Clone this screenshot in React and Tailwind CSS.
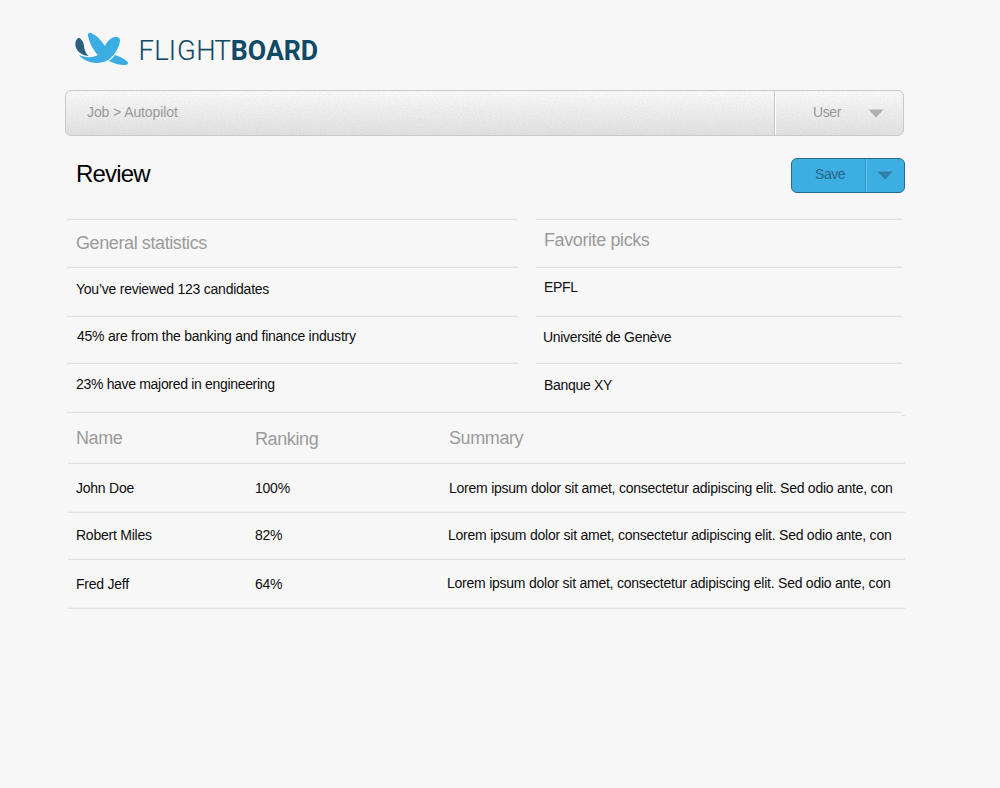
import React from "react";

const rule = "border-t border-[#e1e1e1] shadow-[0_-1px_0_#f0f0f0]";
const body = "text-[14px] leading-5 text-[#0d0d0d] tracking-[-0.24px]";
const bodyTight = "text-[14px] leading-5 text-[#0d0d0d] tracking-[-0.32px]";
const heading = "text-[18px] leading-6 text-[#9b9b9b] tracking-[-0.4px]";

function Row({ size, children }) {
  return <div className={`flex items-start whitespace-nowrap ${rule} ${size}`}>{children}</div>;
}

function Grain({ id, opacity }) {
  return (
    <svg className="pointer-events-none absolute inset-0 h-full w-full" opacity={opacity} aria-hidden="true">
      <filter id={id}>
        <feTurbulence type="fractalNoise" baseFrequency="0.7" numOctaves="2" seed="4" />
        <feColorMatrix type="matrix" values="0 0 0 0 0.3  0 0 0 0 0.3  0 0 0 0 0.3  1.6 0 0 0 -0.6" />
      </filter>
      <rect width="100%" height="100%" filter={`url(#${id})`} />
    </svg>
  );
}

function Logo() {
  return (
    <svg width="260" height="46" viewBox="0 0 260 46" aria-label="Flightboard">
      <g transform="scale(0.33333)">
        <path fill="#2a5f7e" d="M26 35C20 38 15 46 16 56C18 72 31 88 56 90C47 82 43 72 42 60C41 47 34 38 26 35Z" />
        <path fill="#3aaee3" d="M54 31C52 24 56 19 63 21C79 27 94 44 105 60C112 45 123 34 136 33C146 32 151 37 150 45C147 66 132 91 113 103C92 115 64 113 45 102C36 97 30 92 28 87C44 95 66 96 83 88C69 71 58 50 54 31Z" />
        <path fill="#3aaee3" d="M135 87C151 92 167 101 173 108C176 113 172 117 164 117C148 117 130 112 116 105C124 100 130 94 135 87Z" />
      </g>
      <g fill="#0f4a66" fontFamily="Roboto, 'Liberation Sans', sans-serif" fontSize="27.4">
        <text x="68.6 84.3 98.7 107 126.2 144.5" y="33.8" fontWeight="300" stroke="#0f4a66" strokeWidth="0.15">FLIGHT</text>
        <text x="160.8" y="33.8" fontWeight="700" textLength="87.4" lengthAdjust="spacingAndGlyphs">BOARD</text>
      </g>
    </svg>
  );
}

function Caret({ className }) {
  return (
    <svg width="16" height="9" viewBox="0 0 16 9" className={className} aria-hidden="true">
      <path d="M0.5 0.5H15.5L8 8.5Z" fill="currentColor" />
    </svg>
  );
}

function NavBar() {
  return (
    <nav className="relative flex h-[46px] w-[839px] overflow-hidden rounded-md border border-[#c9c9c9] bg-linear-to-b from-[#fafafa] to-[#e1e1e1] text-[14px] leading-5 text-[#999999]">
      <Grain id="grain-nav" opacity="0.13" />
      <div className="relative w-[709px] border-r border-[#c6c6c6] pt-[11px] pl-[21px] tracking-[-0.1px]">Job &gt; Autopilot</div>
      <div className="relative flex flex-1 border-l border-white pt-[11px] pl-[37px] tracking-[-0.4px]">
        <span className="w-[55px]">User</span>
        <Caret className="mt-[7px] text-[#b0b0b0]" />
      </div>
    </nav>
  );
}

function SaveButton() {
  return (
    <div className="relative mt-px flex h-[35px] w-[114px] overflow-hidden rounded-md border border-[#246b8e] bg-[#3cafe4] text-[14px] leading-5 text-[#246788]">
      <Grain id="grain-save" opacity="0.1" />
      <button className="relative flex w-[74px] items-start border-r border-[#2c93c4] pt-[5px] pl-[23px] leading-5 tracking-[-0.45px]">Save</button>
      <button className="relative flex flex-1 items-start border-l border-[#6cc6ee] pt-3 pl-[10px] text-[#2e80a8]">
        <Caret className="" />
      </button>
    </div>
  );
}

const summary = "Lorem ipsum dolor sit amet, consectetur adipiscing elit. Sed odio ante, con";

export default function App() {
  return (
    <main className="h-[788px] w-[1000px] overflow-hidden bg-[#f7f7f7] pl-[65px] font-['Liberation_Sans',Arial,sans-serif]">
      <header className="pt-[26px] pl-[5px]">
        <div className="flex h-16"><Logo /></div>
      </header>
      <NavBar />
      <div className="flex h-[83px] w-[840px] items-start justify-between pt-[21px]">
        <h1 className="mt-[2px] pl-[11px] text-[24px] leading-[30px] tracking-[-0.8px] text-black">Review</h1>
        <SaveButton />
      </div>

      <div className="flex gap-[18px] pl-[2px]">
        <section className="w-[451px]">
          <Row size="h-12 w-[450px]"><h2 className={`pt-[11px] pl-[9px] ${heading}`}>General statistics</h2></Row>
          <Row size="h-[49px]"><p className={`pt-[11px] pl-[9px] ${body}`}>You’ve reviewed 123 candidates</p></Row>
          <Row size="h-[47px]"><p className={`pt-[9px] pl-[10px] ${body}`}>45% are from the banking and finance industry</p></Row>
          <Row size="h-[49px]"><p className={`pt-[10px] pl-[9px] ${bodyTight}`}>23% have majored in engineering</p></Row>
        </section>
        <section className="w-[366px]">
          <Row size="h-12"><h2 className={`pt-2 pl-2 ${heading}`}>Favorite picks</h2></Row>
          <Row size="h-[49px]"><p className={`pt-[9px] pl-2 ${bodyTight}`}>EPFL</p></Row>
          <Row size="h-[47px]"><p className={`pt-[10px] pl-[7px] ${bodyTight}`}>Université de Genève</p></Row>
          <Row size="h-[49px]"><p className={`pt-[11px] pl-2 ${bodyTight}`}>Banque XY</p></Row>
        </section>
      </div>

      <section className="pl-[2px]">
        <div className="flex h-[51px] w-[838px]">
          <div className={`flex w-[834px] whitespace-nowrap ${rule}`}>
            <h2 className={`w-[188px] pt-[13px] pl-[9px] ${heading}`}>Name</h2>
            <h2 className={`w-[194px] pt-[14px] ${heading}`}>Ranking</h2>
            <h2 className={`pt-[13px] ${heading}`}>Summary</h2>
          </div>
          <div className="mt-[3px] h-px w-1 bg-[#e1e1e1]" />
        </div>
        <div className="w-[838px] pl-px">
          <Row size="h-[49px]">
            <p className={`w-[187px] pt-[14px] pl-2 ${body}`}>John Doe</p>
            <p className={`w-[194px] pt-[14px] ${body}`}>100%</p>
            <p className={`pt-[14px] ${body}`}>{summary}</p>
          </Row>
          <Row size="h-[47px]">
            <p className={`w-[187px] pt-3 pl-2 ${body}`}>Robert Miles</p>
            <p className={`w-[193px] pt-3 ${body}`}>82%</p>
            <p className={`pt-3 ${body}`}>{summary}</p>
          </Row>
          <Row size="h-[49px]">
            <p className={`w-[187px] pt-[14px] pl-2 ${body}`}>Fred Jeff</p>
            <p className={`w-[192px] pt-[14px] ${body}`}>64%</p>
            <p className={`pt-[13px] ${body}`}>{summary}</p>
          </Row>
          <Row size="h-px" />
        </div>
      </section>
    </main>
  );
}
